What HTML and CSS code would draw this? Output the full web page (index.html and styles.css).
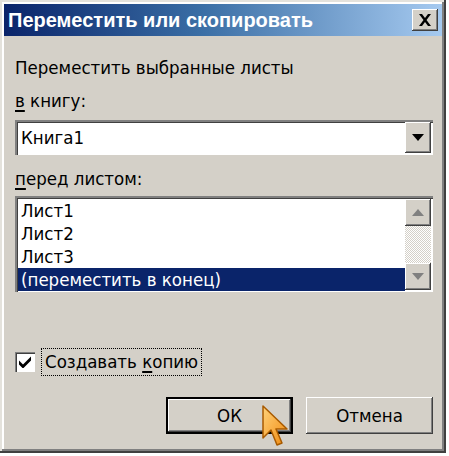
FILE: index.html
```html
<!DOCTYPE html>
<html lang="ru">
<head>
    <meta charset="UTF-8">
    <title>Переместить или скопировать</title>
    <link rel="stylesheet" href="styles.css">
</head>
<body>
    <div class="dialog">
        <div class="title-bar">
            <span class="title-text">Переместить или скопировать</span>
            <button class="close-button">
                <svg width="14" height="12" viewBox="0 0 14 12"><path d="M1 0h3l3 4 3-4h3L8.5 6 13 12h-3L7 8l-3 4H1l4.5-6z" fill="#000"/></svg>
            </button>
        </div>

        <div class="dialog-body">
            <p class="intro">Переместить выбранные листы</p>

            <p class="field-label"><u>в</u> книгу:</p>
            <div class="combo">
                <span class="combo-value">Книга1</span>
                <span class="combo-arrow">
                    <svg width="12" height="7" viewBox="0 0 12 7"><path d="M0 0h12L6 7z" fill="#000"/></svg>
                </span>
            </div>

            <p class="field-label label-sheets"><u>п</u>еред листом:</p>
            <div class="listbox">
                <ul class="list-items">
                    <li>Лист1</li>
                    <li>Лист2</li>
                    <li>Лист3</li>
                    <li class="selected">(переместить в конец)</li>
                </ul>
                <div class="scrollbar">
                    <span class="scroll-button">
                        <svg width="12" height="7" viewBox="0 0 12 7"><path d="M0 7h12L6 0z" fill="#808080"/></svg>
                    </span>
                    <span class="scroll-track"></span>
                    <span class="scroll-button">
                        <svg width="12" height="7" viewBox="0 0 12 7"><path d="M0 0h12L6 7z" fill="#808080"/></svg>
                    </span>
                </div>
            </div>

            <div class="check-row">
                <span class="checkbox">
                    <svg width="14" height="12" viewBox="0 0 14 12"><path d="M1 4.5l4 4 8-8v4l-8 8-4-4z" fill="#000"/></svg>
                </span>
                <span class="check-label">Создавать <u>к</u>опию</span>
            </div>

            <div class="buttons">
                <button class="btn btn-default">ОК</button>
                <button class="btn">Отмена</button>
            </div>
        </div>

        <svg class="pointer" width="30" height="44" viewBox="0 0 30 44">
            <defs>
                <linearGradient id="arrowFill" x1="0" y1="0" x2="1" y2="1">
                    <stop offset="0" stop-color="#ffd27a"/>
                    <stop offset="1" stop-color="#f08a10"/>
                </linearGradient>
            </defs>
            <path d="M1 1v32l8-8 6 15 5-2-6-14h11z" fill="url(#arrowFill)" stroke="#a85a00" stroke-width="1.5" stroke-linejoin="round"/>
        </svg>
    </div>
</body>
</html>
```

FILE: styles.css
```css
body {
    margin: 0;
    width: 449px;
    height: 456px;
    background: #fff;
    font-family: "DejaVu Sans Condensed", "DejaVu Sans", sans-serif;
    font-size: 18.5px;
    color: #000;
    overflow: hidden;
}

.dialog {
    position: relative;
    width: 446px;
    height: 453px;
    box-sizing: border-box;
    padding: 4px;
    background: #d4d0c8;
    box-shadow: inset -2px -2px #404040, inset 2px 2px #e4e2dc, inset -4px -4px #808080, inset 4px 4px #fff;
    display: flex;
    flex-direction: column;
}

.title-bar {
    height: 32px;
    display: flex;
    align-items: center;
    justify-content: space-between;
    padding: 0 4px 0 4px;
    background: linear-gradient(to right, #0a246a 0%, #3a6ea5 45%, #a6caf0 100%);
}

.title-text {
    color: #fff;
    font-family: "Liberation Sans", Arial, sans-serif;
    font-weight: bold;
    font-size: 20px;
}

.close-button {
    width: 26px;
    height: 22px;
    padding: 0;
    border: none;
    background: #d4d0c8;
    box-shadow: inset -1px -1px #404040, inset 1px 1px #fff, inset -2px -2px #808080;
    display: flex;
    align-items: center;
    justify-content: center;
}

.dialog-body {
    flex: 1;
    padding: 0 9px 0 11px;
    display: flex;
    flex-direction: column;
}

.intro {
    margin: 19px 0 0;
    line-height: 26px;
}

.field-label {
    margin: 7px 0 0;
    line-height: 26px;
}

.label-sheets {
    margin-top: 11px;
}

.field-label u,
.check-label u {
    text-decoration-thickness: 2px;
    text-underline-offset: 3px;
}

.combo {
    margin-top: 6px;
    height: 35px;
    box-sizing: border-box;
    background: #fff;
    box-shadow: inset 2px 2px #808080, inset 3px 3px #404040, inset -2px -2px #fff;
    display: flex;
    align-items: center;
    justify-content: space-between;
    padding: 2px 2px 2px 6px;
}

.combo-arrow,
.scroll-button {
    width: 26px;
    box-sizing: border-box;
    background: #d4d0c8;
    box-shadow: inset -1px -1px #404040, inset 1px 1px #fff, inset -2px -2px #808080;
    display: flex;
    align-items: center;
    justify-content: center;
}

.combo-arrow {
    height: 31px;
}

.listbox {
    margin-top: 4px;
    height: 96px;
    box-sizing: border-box;
    padding: 3px 2px 2px 3px;
    background: #fff;
    box-shadow: inset 2px 2px #808080, inset 3px 3px #404040, inset -2px -2px #fff;
    display: flex;
}

.list-items {
    flex: 1;
    margin: 0;
    padding: 0;
    list-style: none;
}

.list-items li {
    height: 23px;
    line-height: 23px;
    padding-left: 3px;
}

.list-items .selected {
    background: #0a246a;
    color: #fff;
}

.scrollbar {
    width: 26px;
    display: flex;
    flex-direction: column;
}

.scroll-button {
    height: 27px;
}

.scroll-track {
    flex: 1;
    background-color: #fff;
    background-image: conic-gradient(#d4d0c8 25%, #fff 0 50%, #d4d0c8 0 75%, #fff 0);
    background-size: 2px 2px;
}

.check-row {
    margin-top: 56px;
    display: flex;
    align-items: center;
    gap: 6px;
}

.checkbox {
    width: 20px;
    height: 20px;
    box-sizing: border-box;
    background: #fff;
    box-shadow: inset 1px 1px #808080, inset 2px 2px #404040, inset -1px -1px #fff;
    display: flex;
    align-items: center;
    justify-content: center;
}

.check-label {
    height: 28px;
    line-height: 26px;
    padding: 0 3px;
    box-sizing: border-box;
    border: 1px dotted #000;
}

.buttons {
    margin-top: 21px;
    display: flex;
    justify-content: flex-end;
    gap: 13px;
}

.btn {
    width: 127px;
    height: 37px;
    padding: 0;
    border: none;
    background: #d4d0c8;
    box-shadow: inset -1px -1px #404040, inset 1px 1px #fff, inset -2px -2px #808080;
    font-family: inherit;
    font-size: 18.5px;
    color: #000;
}

.btn-default {
    border: 2px solid #000;
}

.pointer {
    position: absolute;
    left: 262px;
    top: 405px;
}
```
